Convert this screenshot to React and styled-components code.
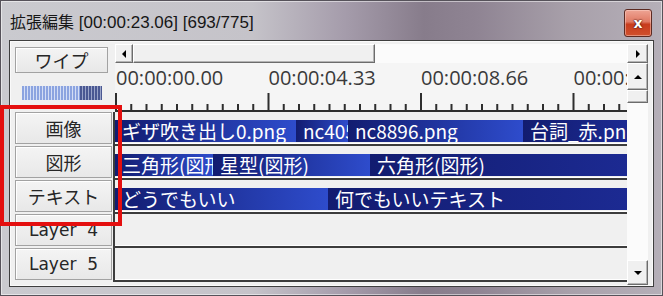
import React from "react";
import styled, { createGlobalStyle } from "styled-components";

const GlobalStyle = createGlobalStyle`
  html, body {
    margin: 0;
    padding: 0;
    background: #ffffff;
  }
  body {
    font-family: "Open Sans", "Noto Sans CJK JP", sans-serif;
  }
`;

const Page = styled.div`
  position: relative;
  width: 663px;
  height: 296px;
  overflow: hidden;
`;

const Window = styled.div`
  width: 663px;
  height: 296px;
  box-sizing: border-box;
  display: flex;
  flex-direction: column;
  border: 1px solid #56525a;
  background: linear-gradient(
    90deg,
    #cacacf 0%,
    #c5c3c9 38%,
    #a59cab 52%,
    #877c8b 64%,
    #8f8493 72%,
    #a8a0aa 86%,
    #b5afb8 100%
  );
  box-shadow: inset 0 0 0 1px rgba(255, 255, 255, 0.5);
`;

const TitleBar = styled.div`
  height: 39px;
  flex: none;
  display: flex;
  align-items: flex-start;
  padding: 0 10px 0 9px;
`;

const Title = styled.div`
  margin-top: 8px;
  font-family: "Liberation Sans", "Noto Sans CJK JP", sans-serif;
  font-size: 17px;
  line-height: 24px;
  color: #161616;
  white-space: nowrap;
`;

const TitleJa = styled.span`
  font-family: "Noto Sans CJK JP", sans-serif;
  font-size: 16px;
`;

const CloseButton = styled.div`
  margin-left: auto;
  margin-top: 8px;
  width: 28px;
  height: 28px;
  box-sizing: border-box;
  border: 1px solid #5c2a22;
  border-radius: 3px;
  background: linear-gradient(
    180deg,
    #eea494 0%,
    #e07a64 45%,
    #c83c1c 55%,
    #d0502e 100%
  );
  box-shadow: inset 0 0 0 1px rgba(255, 220, 210, 0.45);
  display: flex;
  align-items: center;
  justify-content: center;
  color: #ffffff;
  font-family: "DejaVu Sans", sans-serif;
  font-weight: bold;
  font-size: 14px;
  line-height: 1;
  text-shadow: 0 0 2px #3a0a04, 0 0 1px #3a0a04;
`;

const Client = styled.div`
  flex: none;
  height: 247px;
  margin: 0 8px;
  box-sizing: border-box;
  border: 1px solid #3e3e3e;
  padding: 1px;
  background: #f0f0f0;
  box-shadow: inset 0 0 0 1px #fafafa;
  display: flex;
`;

const LeftPanel = styled.div`
  width: 102px;
  flex: none;
  display: flex;
  flex-direction: column;
`;

const LeftHeader = styled.div`
  height: 70px;
  box-sizing: border-box;
  padding: 5px 0 0 4px;
`;

const LayerButton = styled.div`
  width: ${({ w }) => w}px;
  height: ${({ h }) => h}px;
  box-sizing: border-box;
  border: 1px solid #a2a2a2;
  background: linear-gradient(180deg, #f4f4f4, #e8e8e8);
  box-shadow: inset 1px 1px 0 #ffffff;
  display: flex;
  align-items: center;
  justify-content: center;
  color: #262626;
  font-family: ${({ latin }) =>
    latin ? '"DejaVu Sans", sans-serif' : '"Noto Sans CJK JP", sans-serif'};
  font-size: ${({ latin }) => (latin ? "17px" : "18px")};
  white-space: pre;
`;

const Meter = styled.div`
  display: flex;
  margin: 13px 0 0 7px;
  height: 14px;
`;

const MeterPart = styled.div`
  width: ${({ w }) => w}px;
  background: ${({ dark }) =>
    dark
      ? "repeating-linear-gradient(90deg, #4a5892 0 2px, #9aa4c8 2px 3px)"
      : "repeating-linear-gradient(90deg, #8ca4e0 0 2px, #d4def5 2px 3px)"};
`;

const LayerCell = styled.div`
  height: 34px;
  box-sizing: border-box;
  padding: 0 0 2px 4px;
`;

const MainPanel = styled.div`
  flex: 1;
  display: flex;
  flex-direction: column;
`;

const HScroll = styled.div`
  height: 19px;
  margin: 2px 4px 0 2px;
  display: flex;
  background: #fbfbfb;
`;

const ScrollButton = styled.div`
  width: ${({ w }) => w}px;
  height: ${({ h }) => h}px;
  flex: none;
  box-sizing: border-box;
  border: 1px solid;
  border-color: #ffffff #6c6c6c #6c6c6c #ffffff;
  box-shadow: inset -1px -1px 0 #b4b4b4;
  background: #f0f0f0;
  display: flex;
  align-items: center;
  justify-content: center;
`;

const Track = styled.div`
  flex: 1;
  background: #fbfbfb;
`;

const Body = styled.div`
  flex: 1;
  display: flex;
`;

const TimelineCol = styled.div`
  width: 514px;
  flex: none;
  display: flex;
  flex-direction: column;
`;

const Ruler = styled.div`
  height: 49px;
  margin-left: 2px;
  display: flex;
  flex-direction: column;
  background: #f5f5f5;
  overflow: hidden;
`;

const Labels = styled.div`
  height: 28px;
  display: flex;
  padding-top: 2px;
  box-sizing: border-box;
`;

const TimeLabel = styled.div`
  width: 152.5px;
  flex: none;
  padding-left: 1px;
  box-sizing: border-box;
  font-size: 20px;
  line-height: 26px;
  color: #3a3a3a;
  white-space: nowrap;
`;

const Row = styled.div`
  height: 34px;
  box-sizing: border-box;
  padding-top: 8px;
  border-left: 2px solid #3c3c3c;
  border-bottom: 2px solid #3c3c3c;
  box-shadow: inset 0 -1px 0 #ffffff;
  background: #f0f0f0;
`;

const ClipBar = styled.div`
  height: 22px;
  display: flex;
  overflow: hidden;
`;

const Clip = styled.div`
  width: ${({ w }) => (w ? `${w}px` : "auto")};
  flex: ${({ w }) => (w ? "none" : "1")};
  box-sizing: border-box;
  padding-left: 7px;
  overflow: hidden;
  white-space: nowrap;
  background: linear-gradient(
    90deg,
    #121c70 0%,
    ${({ tail }) => (tail ? "#1c2a92" : "#2e4ccc")} 100%
  );
  color: #ffffff;
  font-family: "Noto Sans CJK JP", sans-serif;
  font-size: 19px;
  line-height: 22px;
`;

const VScroll = styled.div`
  width: 21px;
  flex: none;
  display: flex;
  flex-direction: column;
  background: #fcfcfc;
`;

const Annotation = styled.div`
  position: absolute;
  left: 0;
  top: 105px;
  width: 122px;
  height: 121px;
  box-sizing: border-box;
  border: 4px solid #e40f0f;
  pointer-events: none;
`;

const Arrow = ({ dir }) => {
  const pts = {
    left: "4,0 4,8 0,4",
    right: "0,0 0,8 4,4",
    up: "0,4 8,4 4,0",
    down: "0,0 8,0 4,4",
  }[dir];
  const horiz = dir === "left" || dir === "right";
  return (
    <svg width={horiz ? 4 : 8} height={horiz ? 8 : 4} viewBox={horiz ? "0 0 4 8" : "0 0 8 4"}>
      <polygon points={pts} fill="#000" />
    </svg>
  );
};

const RulerTicks = () => {
  const ticks = [];
  for (let i = 0; i <= 33; i++) {
    const x = i * 15.25 + 1;
    const major = i % 10 === 0;
    ticks.push(
      <rect key={i} x={x - 1} y={major ? 2 : 13} width="2" height={major ? 18 : 7} fill="#2e2e2e" />
    );
  }
  return (
    <svg width="512" height="21" viewBox="0 0 512 21">
      {ticks}
      <rect x="0" y="19" width="512" height="2" fill="#2e2e2e" />
    </svg>
  );
};

const layers = ["画像", "図形", "テキスト", "Layer  4", "Layer  5"];

const rows = [
  [
    { w: 181, text: "ギザ吹き出し0.png" },
    { w: 52, text: "nc40512.png" },
    { w: 175, text: "nc8896.png" },
    { text: "台詞_赤.png", tail: true },
  ],
  [
    { w: 98, text: "三角形(図形)" },
    { w: 157, text: "星型(図形)" },
    { text: "六角形(図形)", tail: true },
  ],
  [
    { w: 213, text: "どうでもいい" },
    { text: "何でもいいテキスト", tail: true },
  ],
  [],
  [],
];

const times = ["00:00:00.00", "00:00:04.33", "00:00:08.66", "00:00:12.99"];

export default function App() {
  return (
    <Page>
      <GlobalStyle />
      <Window>
        <TitleBar>
          <Title>
            <TitleJa>拡張編集</TitleJa> [00:00:23.06] [693/775]
          </Title>
          <CloseButton>x</CloseButton>
        </TitleBar>
        <Client>
          <LeftPanel>
            <LeftHeader>
              <LayerButton w={93} h={26}>ワイプ</LayerButton>
              <Meter>
                <MeterPart w={58} />
                <MeterPart w={22} dark />
              </Meter>
            </LeftHeader>
            {layers.map((name) => (
              <LayerCell key={name}>
                <LayerButton w={97} h={32} latin={name.startsWith("Layer")}>
                  {name}
                </LayerButton>
              </LayerCell>
            ))}
          </LeftPanel>
          <MainPanel>
            <HScroll>
              <ScrollButton w={18} h={19}>
                <Arrow dir="left" />
              </ScrollButton>
              <ScrollButton w={242} h={19} />
              <Track />
              <ScrollButton w={21} h={19}>
                <Arrow dir="right" />
              </ScrollButton>
            </HScroll>
            <Body>
              <TimelineCol>
                <Ruler>
                  <Labels>
                    {times.map((t) => (
                      <TimeLabel key={t}>{t}</TimeLabel>
                    ))}
                  </Labels>
                  <RulerTicks />
                </Ruler>
                {rows.map((clips, i) => (
                  <Row key={i}>
                    {clips.length > 0 && (
                      <ClipBar>
                        {clips.map((c) => (
                          <Clip key={c.text} w={c.w} tail={c.tail}>
                            {c.text}
                          </Clip>
                        ))}
                      </ClipBar>
                    )}
                  </Row>
                ))}
              </TimelineCol>
              <VScroll>
                <ScrollButton w={21} h={27}>
                  <Arrow dir="up" />
                </ScrollButton>
                <ScrollButton w={21} h={13} />
                <Track />
                <ScrollButton w={21} h={25}>
                  <Arrow dir="down" />
                </ScrollButton>
              </VScroll>
            </Body>
          </MainPanel>
        </Client>
      </Window>
      <Annotation />
    </Page>
  );
}
